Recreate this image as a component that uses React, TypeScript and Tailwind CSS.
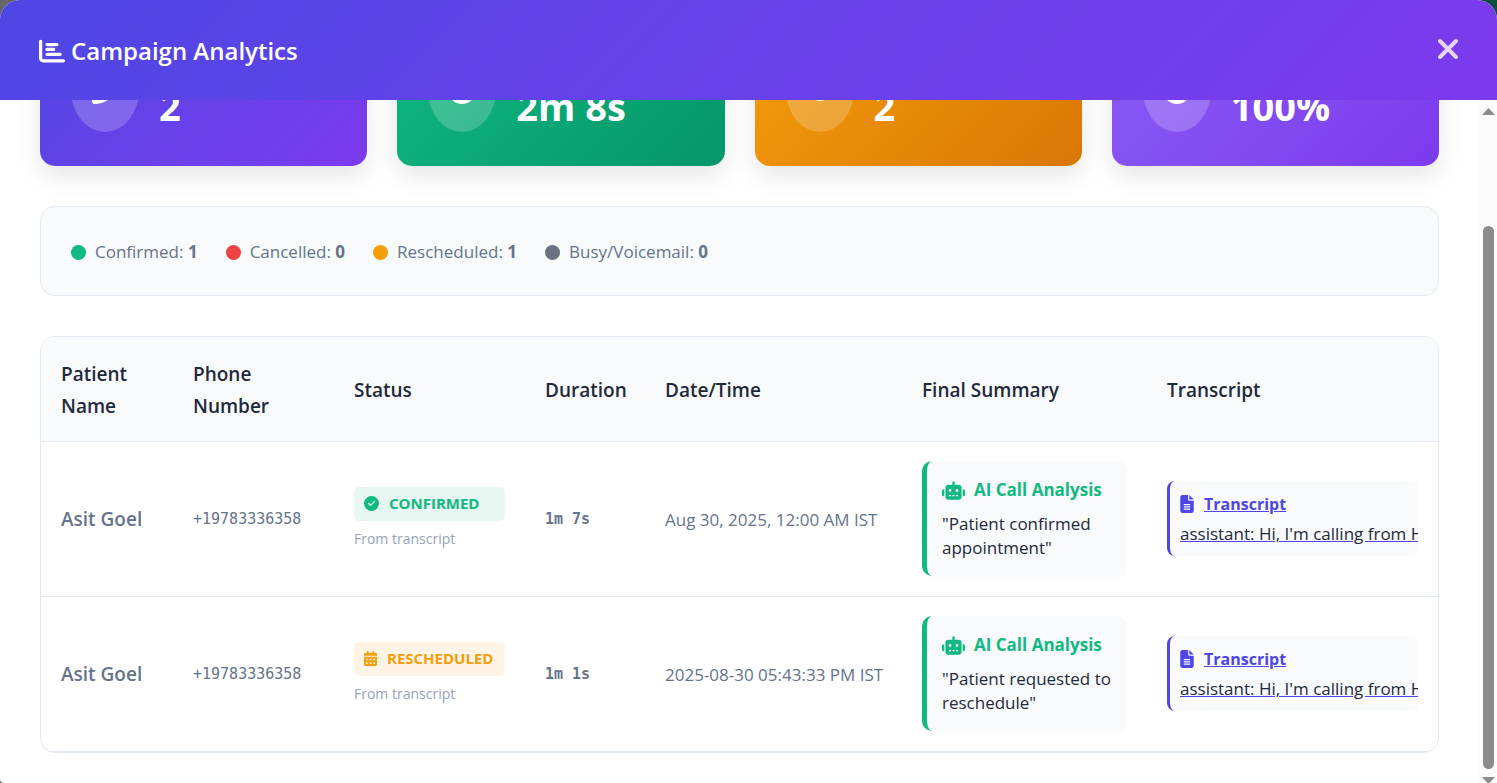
import { useLayoutEffect, useRef } from "react";
import type { IconType } from "react-icons";
import {
  FaCalendarDays,
  FaChartBar,
  FaCircleCheck,
  FaClock,
  FaEye,
  FaFileLines,
  FaPhoneFlip,
  FaRobot,
  FaXmark,
} from "react-icons/fa6";

type Stat = { id: string; value: string; icon: IconType; tone: string };

const stats: Stat[] = [
  { id: "calls", value: "2", icon: FaPhoneFlip, tone: "from-[#4f46e5] to-[#7c3aed]" },
  { id: "duration", value: "2m 8s", icon: FaClock, tone: "from-[#10b981] to-[#059669]" },
  { id: "reviewed", value: "2", icon: FaEye, tone: "from-[#f59e0b] to-[#d97706]" },
  { id: "success", value: "100%", icon: FaCircleCheck, tone: "from-[#8b5cf6] to-[#7c3aed]" },
];

const legend = [
  { label: "Confirmed", count: 1, dot: "bg-[#10b981]" },
  { label: "Cancelled", count: 0, dot: "bg-[#ef4444]" },
  { label: "Rescheduled", count: 1, dot: "bg-[#f59e0b]" },
  { label: "Busy/Voicemail", count: 0, dot: "bg-[#6b7280]" },
];

const columns = [
  { title: "Patient Name", width: "w-[132px]" },
  { title: "Phone Number", width: "w-[161px]" },
  { title: "Status", width: "w-[191px]" },
  { title: "Duration", width: "w-[120px]" },
  { title: "Date/Time", width: "w-[257px]" },
  { title: "Final Summary", width: "w-[245px]" },
  { title: "Transcript", width: "w-[291px]" },
];

const calls = [
  {
    name: "Asit Goel",
    phone: "+19783336358",
    status: "CONFIRMED",
    icon: FaCircleCheck,
    iconWidth: "w-[15px]",
    badge: "bg-[#e7f7f2] text-[#10b981]",
    duration: "1m 7s",
    date: "Aug 30, 2025, 12:00 AM IST",
    summary: '"Patient confirmed appointment"',
    transcript: "assistant: Hi, I'm calling from H",
  },
  {
    name: "Asit Goel",
    phone: "+19783336358",
    status: "RESCHEDULED",
    icon: FaCalendarDays,
    iconWidth: "w-[13px]",
    badge: "bg-[#fff4e6] text-[#f59e0b]",
    duration: "1m 1s",
    date: "2025-08-30 05:43:33 PM IST",
    summary: '"Patient requested to reschedule"',
    transcript: "assistant: Hi, I'm calling from H",
  },
];

function StatCard({ value, icon: Icon, tone }: Stat) {
  return (
    <div className={`flex h-[152px] items-center gap-5 rounded-[15px] bg-linear-135 px-[31px] text-white shadow-[0_10px_25px_rgba(0,0,0,0.1)] ${tone}`}>
      <div className="flex h-[84px] w-[68px] shrink-0 items-center justify-center rounded-[50%] bg-white/20">
        <Icon className="h-7 w-auto" />
      </div>
      <p className="pt-8 text-[38px] font-bold leading-[56px]">{value}</p>
    </div>
  );
}

function ScrollRail() {
  return (
    <div aria-hidden="true" className="flex w-[18px] shrink-0 flex-col items-center bg-[#fcfcfc] pt-2">
      <svg className="h-[7px] w-[13px] fill-[#8b8b8b]" viewBox="0 0 13 7">
        <path d="M0 7 6.5 0 13 7z" />
      </svg>
      <div className="mt-[111px] w-[11px] flex-1 rounded-full bg-[#8b8b8b]" />
      <svg className="mt-2 h-[6px] w-[13px] fill-[#8b8b8b]" viewBox="0 0 13 6">
        <path d="M0 0H13L6.5 7z" />
      </svg>
    </div>
  );
}

export default function App() {
  const body = useRef<HTMLDivElement>(null);

  useLayoutEffect(() => {
    if (body.current) body.current.scrollTop = body.current.scrollHeight;
  }, []);

  return (
    <div className="h-screen bg-linear-to-r from-[#666666] to-[#0b4f3a] font-['Open_Sans',sans-serif]">
      <div role="dialog" aria-labelledby="title" className="flex h-full flex-col overflow-hidden rounded-t-[20px] rounded-bl-[4px] bg-white">
        <header className="flex h-[100px] shrink-0 items-center justify-between bg-linear-135 from-[#4f46e5] to-[#7c3aed] pl-[39px] pr-[33px] text-white">
          <h1 id="title" className="flex items-center gap-[6px] pt-[2px] text-2xl font-semibold">
            <FaChartBar className="size-[26px]" />
            Campaign Analytics
          </h1>
          <button type="button" aria-label="Close" className="pb-[2px] opacity-80">
            <FaXmark className="size-8" />
          </button>
        </header>

        <div className="flex min-h-0 flex-1">
          <div ref={body} className="flex-1 overflow-y-auto px-10 pb-[30px] pt-10 [scrollbar-width:none]">
            <section className="grid grid-cols-4 gap-[30px]">
              {stats.map((s) => (
                <StatCard key={s.id} {...s} />
              ))}
            </section>

            <ul className="mt-10 flex h-[90px] items-center gap-7 rounded-[15px] border border-[#e2e8f0] bg-[#f8fafc] px-[30px] pt-[2px] text-[17px] text-[#64748b]">
              {legend.map((l) => (
                <li key={l.label} className="flex items-center gap-[9px]">
                  <span className={`size-[15px] rounded-full ${l.dot}`} />
                  <span>
                    {l.label}: <strong className="font-bold">{l.count}</strong>
                  </span>
                </li>
              ))}
            </ul>

            <div className="mt-10 overflow-hidden rounded-[15px] border border-[#e2e8f0]">
              <table className="w-full table-fixed border-collapse text-left text-[#64748b]">
                <thead>
                  <tr className="h-[104px] border-b border-[#e2e8f0] bg-[#f8fafc]">
                    {columns.map((c) => (
                      <th key={c.title} scope="col" className={`px-5 pt-[2px] text-[19px] font-semibold leading-8 text-[#1e293b] ${c.width}`}>
                        {c.title}
                      </th>
                    ))}
                  </tr>
                </thead>
                <tbody>
                  {calls.map((c) => (
                    <tr key={c.status} className="h-[155px] border-b border-[#e2e8f0]">
                      <td className="px-5 pt-[2px] text-[19px] font-semibold">{c.name}</td>
                      <td className="px-5 pt-[2px] font-['DejaVu_Sans_Mono',monospace] text-[15px]">{c.phone}</td>
                      <td className="px-5 pb-[2px]">
                        <div className={`flex h-[34px] items-center gap-[10px] rounded-[5px] px-[10px] text-[15px] font-bold ${c.badge}`}>
                          <c.icon className={`h-[15px] shrink-0 ${c.iconWidth}`} />
                          {c.status}
                        </div>
                        <p className="mt-2 text-sm text-[#94a3b8]">From transcript</p>
                      </td>
                      <td className="px-5 pt-[2px] font-['DejaVu_Sans_Mono',monospace] text-[15px] font-bold">{c.duration}</td>
                      <td className="whitespace-nowrap px-5 pt-[2px] text-[17px]">{c.date}</td>
                      <td className="px-5">
                        <div className="h-[115px] rounded-[10px] border-l-[5px] border-[#10b981] bg-[#f8fafc] pl-[15px] pr-3 pt-[17px] shadow-[0_1px_3px_rgba(0,0,0,0.03)]">
                          <p className="flex items-center gap-[9px] whitespace-nowrap text-[17px] font-bold leading-6 text-[#10b981]">
                            <FaRobot className="size-[23px]" />
                            AI Call Analysis
                          </p>
                          <p className="mt-[10px] text-[17px] font-medium leading-6 text-[#1e293b]">{c.summary}</p>
                        </div>
                      </td>
                      <td className="px-5">
                        <a href="#transcript" className="block h-[75px] overflow-hidden rounded-[8px] border-l-[3px] border-[#4f46e5] bg-[#f8fafc] px-[10px] pt-[11px] text-[#4f46e5]">
                          <span className="flex items-center gap-[10px] text-base font-bold leading-6">
                            <FaFileLines className="h-[18px] w-[14px]" />
                            <span className="underline">Transcript</span>
                          </span>
                          <span className="mt-[6px] block whitespace-nowrap text-[17px] leading-6 underline">
                            <span className="text-[#1e293b]">{c.transcript}</span>
                          </span>
                        </a>
                      </td>
                    </tr>
                  ))}
                </tbody>
              </table>
            </div>
          </div>
          <ScrollRail />
        </div>
      </div>
    </div>
  );
}
